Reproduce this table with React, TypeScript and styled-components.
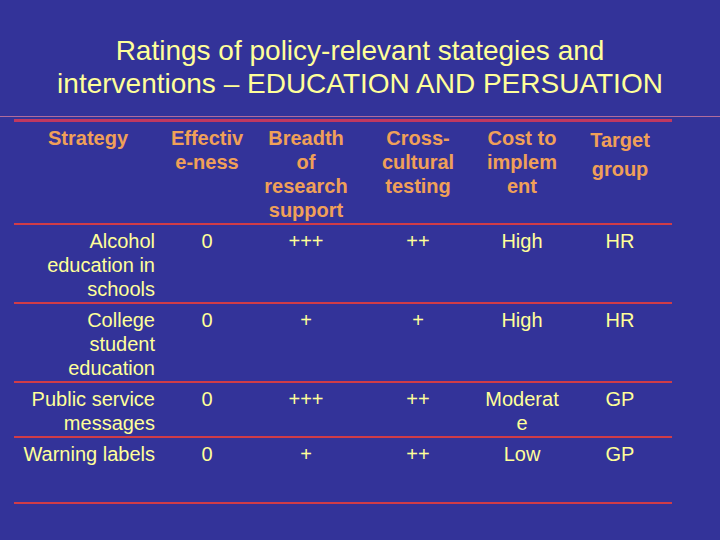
import React from "react";
import styled, { createGlobalStyle } from "styled-components";

const Global = createGlobalStyle`
  html, body { margin: 0; padding: 0; background: #333399; }
  body { font-family: "Liberation Sans", Arial, sans-serif; }
`;

const Page = styled.div`
  width: 720px;
  height: 540px;
  background: #333399;
  overflow: hidden;
  display: flex;
  flex-direction: column;
`;

const Title = styled.h1`
  margin: 34px 0 0 0;
  font-size: 28px;
  line-height: 33px;
  font-weight: normal;
  color: #ffff99;
  text-align: center;
`;

const ThinRule = styled.div`
  margin-top: 16px;
  height: 1px;
  background: #b06c9c;
`;

const Table = styled.div`
  margin: 2px 0 0 14px;
  width: 658px;
  border-top: 3px solid #c03860;
  display: flex;
  flex-direction: column;
`;

const Row = styled.div<{ $h: number }>`
  display: grid;
  grid-template-columns: 148px 90px 108px 116px 92px 104px;
  height: ${(p) => p.$h}px;
  border-bottom: 2px solid #d03c48;
  box-sizing: content-box;
`;

const Cell = styled.div<{ $align?: string; $head?: boolean; $lh?: number }>`
  padding: 4px 7px 0 7px;
  font-size: 20px;
  line-height: ${(p) => p.$lh ?? 24}px;
  font-weight: ${(p) => (p.$head ? "bold" : "normal")};
  color: ${(p) => (p.$head ? "#f0a058" : "#ffff99")};
  text-align: ${(p) => p.$align ?? "center"};
  white-space: nowrap;
`;

const Lines = ({ t }: { t: string }) => (
  <>
    {t.split("|").map((s, i) => (
      <React.Fragment key={i}>
        {i > 0 && <br />}
        {s}
      </React.Fragment>
    ))}
  </>
);

const rows: { h: number; cells: string[] }[] = [
  { h: 77, cells: ["Alcohol|education in|schools", "0", "+++", "++", "High", "HR"] },
  { h: 77, cells: ["College|student|education", "0", "+", "+", "High", "HR"] },
  { h: 53, cells: ["Public service|messages", "0", "+++", "++", "Moderat|e", "GP"] },
  { h: 64, cells: ["Warning labels", "0", "+", "++", "Low", "GP"] },
];

const headers = [
  "Strategy",
  "Effectiv|e-ness",
  "Breadth|of|research|support",
  "Cross-|cultural|testing",
  "Cost to|implem|ent",
  "Target|group",
];

export default function App() {
  return (
    <Page>
      <Global />
      <Title>
        Ratings of policy-relevant stategies and
        <br />
        interventions – EDUCATION AND PERSUATION
      </Title>
      <ThinRule />
      <Table>
        <Row $h={101}>
          {headers.map((h, i) => (
            <Cell key={i} $head $lh={i === 5 ? 29 : 24}>
              <Lines t={h} />
            </Cell>
          ))}
        </Row>
        {rows.map((r, ri) => (
          <Row key={ri} $h={r.h}>
            {r.cells.map((c, ci) => (
              <Cell key={ci} $align={ci === 0 ? "right" : "center"}>
                <Lines t={c} />
              </Cell>
            ))}
          </Row>
        ))}
      </Table>
    </Page>
  );
}
